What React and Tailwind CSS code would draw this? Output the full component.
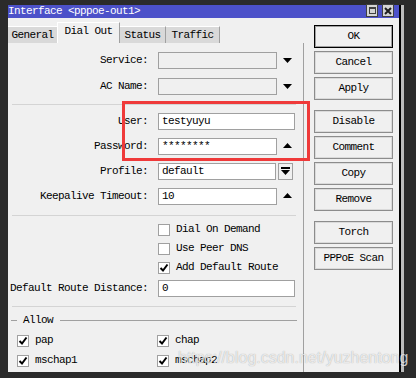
import React from 'react';

const Down = () => (
  <svg width="9" height="5" viewBox="0 0 9 5"><polygon points="0,0 9,0 4.5,5" fill="#000" /></svg>
);
const Up = () => (
  <svg width="9" height="5" viewBox="0 0 9 5"><polygon points="0,5 9,5 4.5,0" fill="#000" /></svg>
);

const Check = () => (
  <svg width="10" height="10" viewBox="0 0 10 10">
    <path d="M1.5 5 L4 7.5 L8.5 1.5" stroke="#000" strokeWidth="2" fill="none" />
  </svg>
);

const Box = ({ checked }) => (
  <div className="w-[12px] h-[12px] border border-[#a0a0a0] bg-white flex items-center justify-center shrink-0">
    {checked && <Check />}
  </div>
);

const Row = ({ label, children, className = '' }) => (
  <div className={`flex items-center h-[17px] ${className}`}>
    <div className="w-[140px] text-right whitespace-nowrap">{label}</div>
    <div className="ml-[10px] flex items-center">{children}</div>
  </div>
);

const Field = ({ w, value, disabled }) => (
  <div
    className={`h-[17px] border border-[#a0a0a0] ${disabled ? 'bg-[#f0f0f0]' : 'bg-white'} pl-[3px] leading-[15px] whitespace-nowrap`}
    style={{ width: w }}
  >
    {value}
  </div>
);

const Btn = ({ children, def, className = '' }) => (
  <div
    className={`w-[79px] h-[23px] flex items-center justify-center bg-[#f0f0f0] ${
      def ? 'border border-black shadow-[inset_0_0_0_1px_#a0a0a0]' : 'border border-[#8c8c8c] shadow-[inset_0_0_0_1px_#dadada]'
    } ${className}`}
  >
    {children}
  </div>
);

const Sep = ({ className = '' }) => <div className={`ml-[4px] w-[284px] h-px bg-[#d4d4d4] ${className}`} />;

const Check2 = ({ label, className = '' }) => (
  <div className={`flex items-center h-[13px] ${className}`}>
    <Box checked />
    <span className="ml-[6px]">{label}</span>
  </div>
);

export default function App() {
  return (
    <div className="w-[416px] h-[378px] bg-[#2b2b2b] relative overflow-hidden font-['Liberation_Mono',monospace] text-[11px] tracking-[-0.6px] text-black">
      <div className="flex pt-[5px]">
        <div className="w-[8px] shrink-0" />
        <div className="w-[391px] h-[367px] bg-[#f0f0f0] flex flex-col shrink-0">
          {/* Title bar */}
          <div className="h-[13px] bg-[#4c51c9] text-white leading-[13px] whitespace-nowrap">
            Interface &lt;pppoe-out1&gt;
          </div>

          <div className="flex flex-1">
            {/* Left */}
            <div className="w-[296px] flex flex-col">
              {/* Tabs */}
              <div className="mt-[4px] h-[21px] flex items-end">
                <div className="w-[49px] h-[17px] bg-[#d9d9d9] border-t border-white flex items-center justify-center">General</div>
                <div className="w-[63px] h-[21px] bg-[#f0f0f0] border-l border-t border-white border-r border-r-[#a0a0a0] flex items-center justify-center pb-[3px]">Dial Out</div>
                <div className="w-[46px] h-[17px] bg-[#d9d9d9] border-t border-white border-r border-r-[#a0a0a0] flex items-center justify-center">Status</div>
                <div className="w-[54px] h-[17px] bg-[#d9d9d9] border-t border-white border-r border-r-[#a0a0a0] flex items-center justify-center">Traffic</div>
              </div>

              {/* Panel */}
              <div className="flex-1 border-r border-[#a0a0a0] flex flex-col">
                <Row label="Service:" className="mt-[9px]">
                  <Field w={119} disabled />
                  <span className="ml-[6px]"><Down /></span>
                </Row>
                <Row label="AC Name:" className="mt-[9px]">
                  <Field w={119} disabled />
                  <span className="ml-[6px]"><Down /></span>
                </Row>
                <Sep className="mt-[9px]" />
                <Row label="User:" className="mt-[8px]">
                  <Field w={137} value="testyuyu" />
                </Row>
                <Row label="Password:" className="mt-[8px]">
                  <Field w={119} value="********" />
                  <span className="ml-[6px] mb-[2px]"><Up /></span>
                </Row>
                <Row label="Profile:" className="mt-[8px]">
                  <Field w={118} value="default" />
                  <div className="ml-[2px] w-[15px] h-[17px] border border-[#a0a0a0] bg-[#f0f0f0] flex items-center justify-center">
                    <svg width="9" height="9" viewBox="0 0 9 9">
                      <rect x="0" y="0" width="9" height="2" fill="#000" />
                      <polygon points="0,3 9,3 4.5,8" fill="#000" />
                    </svg>
                  </div>
                </Row>
                <Row label="Keepalive Timeout:" className="mt-[8px]">
                  <Field w={119} value="10" />
                  <span className="ml-[6px] mb-[2px]"><Up /></span>
                </Row>
                <Sep className="mt-[10px]" />

                <div className="ml-[150px] mt-[7px] flex flex-col">
                  <div className="flex items-center h-[13px]">
                    <Box />
                    <span className="ml-[6px]">Dial On Demand</span>
                  </div>
                  <div className="flex items-center h-[13px] mt-[6px]">
                    <Box />
                    <span className="ml-[6px]">Use Peer DNS</span>
                  </div>
                  <div className="flex items-center h-[13px] mt-[6px]">
                    <Box checked />
                    <span className="ml-[6px]">Add Default Route</span>
                  </div>
                </div>

                <Row label="Default Route Distance:" className="mt-[6px]">
                  <Field w={137} value="0" />
                </Row>
                <Sep className="mt-[9px]" />

                {/* Allow group */}
                <div className="mt-[7px] h-[13px] flex items-center">
                  <div className="ml-[3px] w-[6px] h-px bg-[#a0a0a0]" />
                  <span className="ml-[6px]">Allow</span>
                  <div className="ml-[7px] w-[237px] h-px bg-[#a0a0a0]" />
                </div>
                <div className="ml-[9px] mt-[7px] grid grid-cols-[140px_1fr] gap-y-[7px]">
                  <Check2 label="pap" />
                  <Check2 label="chap" />
                  <Check2 label="mschap1" />
                  <Check2 label="mschap2" />
                </div>
              </div>
            </div>

            {/* Right buttons */}
            <div className="ml-[10px] mt-[7px] flex flex-col gap-[3px]">
              <Btn def>OK</Btn>
              <Btn>Cancel</Btn>
              <Btn>Apply</Btn>
              <Btn className="mt-[7px]">Disable</Btn>
              <Btn>Comment</Btn>
              <Btn>Copy</Btn>
              <Btn>Remove</Btn>
              <Btn className="mt-[7px]">Torch</Btn>
              <Btn>PPPoE Scan</Btn>
            </div>
          </div>
        </div>
        <div className="w-[2px] h-[367px] bg-black shrink-0" />
        <div className="w-[3px] h-[367px] bg-[#bdbdbd] shrink-0" />
      </div>

      {/* Title bar buttons */}
      <div className="absolute left-[366px] top-[4px] w-[12px] h-[13px] bg-[#d4d4d4] border border-[#404040] flex items-center justify-center">
        <div className="w-[7px] h-[7px] border border-[#404040] border-t-2" />
      </div>
      <div className="absolute left-[382px] top-[4px] w-[12px] h-[13px] bg-[#d4d4d4] border border-[#404040] flex items-center justify-center">
        <svg width="8" height="8" viewBox="0 0 8 8">
          <path d="M1 1 L7 7 M7 1 L1 7" stroke="#202020" strokeWidth="2" />
        </svg>
      </div>

      {/* Red highlight */}
      <div className="absolute left-[122px] top-[101px] w-[188px] h-[60px] border-[3px] border-[#ef3a3a]" />

      {/* Watermark */}
      <div className="absolute left-[178px] top-[346px] font-['Liberation_Sans',sans-serif] text-[16px] tracking-normal text-white/75 [text-shadow:0_0_1px_rgba(0,0,0,0.35)] whitespace-nowrap">
        https://blog.csdn.net/yuzhentong
      </div>
    </div>
  );
}
